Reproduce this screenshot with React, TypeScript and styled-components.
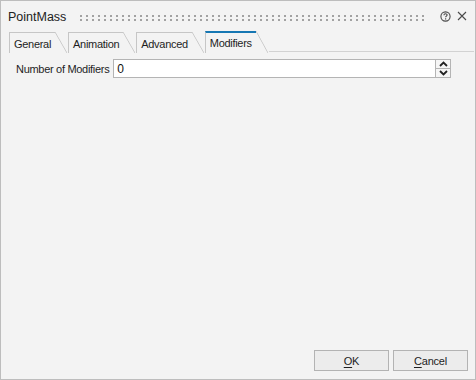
import React from 'react'
import styled, { createGlobalStyle } from 'styled-components'

const GlobalStyle = createGlobalStyle`
  html, body {
    margin: 0;
    padding: 0;
    background: #f3f3f3;
  }
  * {
    box-sizing: border-box;
  }
`

const tabs = ['General', 'Animation', 'Advanced', 'Modifiers']

export default function App() {
  const active = 'Modifiers'

  return (
    <>
      <GlobalStyle />
      <Dialog>
        <TitleBar>
          <Title>PointMass</Title>
          <Grip />
          <TitleIcon title="Help">
            <svg width="11" height="11" viewBox="0 0 11 11">
              <circle cx="5.5" cy="5.5" r="4.6" fill="none" stroke="#4a4a4a" strokeWidth="1.1" />
              <path d="M3.9 4.3 C3.9 3.2 4.6 2.8 5.5 2.8 C6.4 2.8 7.1 3.3 7.1 4.1 C7.1 5.1 5.6 5.2 5.6 6.3" fill="none" stroke="#4a4a4a" strokeWidth="1.1" />
              <rect x="5" y="7.3" width="1.2" height="1.2" fill="#4a4a4a" />
            </svg>
          </TitleIcon>
          <TitleIcon title="Close">
            <svg width="10" height="10" viewBox="0 0 10 10">
              <path d="M1 1 L9 9 M9 1 L1 9" stroke="#4a4a4a" strokeWidth="1.1" />
            </svg>
          </TitleIcon>
        </TitleBar>

        <TabStrip>
          {tabs.map((name) => (
            <Tab key={name} $active={name === active}>
              <TabLabel $active={name === active}>{name}</TabLabel>
              <TabSlant />
            </Tab>
          ))}
          <TabFiller />
        </TabStrip>

        <Content>
          <FieldRow>
            <FieldLabel>Number of Modifiers</FieldLabel>
            <SpinBox>
              <SpinInput defaultValue="0" />
              <SpinButtons>
                <SpinButton>
                  <svg width="9" height="6" viewBox="0 0 9 6">
                    <path d="M1 5 L4.5 1.5 L8 5" fill="none" stroke="#222" strokeWidth="1.8" />
                  </svg>
                </SpinButton>
                <SpinButton>
                  <svg width="9" height="6" viewBox="0 0 9 6">
                    <path d="M1 1 L4.5 4.5 L8 1" fill="none" stroke="#222" strokeWidth="1.8" />
                  </svg>
                </SpinButton>
              </SpinButtons>
            </SpinBox>
          </FieldRow>
        </Content>

        <Footer>
          <DialogButton>
            <u>O</u>K
          </DialogButton>
          <DialogButton>
            <u>C</u>ancel
          </DialogButton>
        </Footer>
      </Dialog>
    </>
  )
}

const Dialog = styled.div`
  width: 476px;
  height: 380px;
  border: 1px solid #bdbdbd;
  background: #f3f3f3;
  display: flex;
  flex-direction: column;
  font-family: "Liberation Sans", Arial, sans-serif;
  font-size: 11px;
  letter-spacing: -0.3px;
  color: #1e1e1e;
`

const TitleBar = styled.div`
  height: 30px;
  display: flex;
  align-items: center;
  padding: 0 7px 0 7px;
  gap: 4px;
`

const Title = styled.span`
  flex: none;
  width: 62px;
  white-space: nowrap;
  font-size: 12.5px;
  letter-spacing: 0;
  color: #222;
  margin-top: 1px;
`

/* two rows of 2px dots, kept on whole pixels so they stay crisp */
const Grip = styled.div`
  flex: 1;
  align-self: flex-start;
  height: 6px;
  margin: 14px 6px 0 6px;
  background-image: conic-gradient(at 2px 2px, transparent 75%, #a2a2a2 0);
  background-size: 6px 4px;
`

const TitleIcon = styled.span`
  flex: none;
  width: 12px;
  height: 12px;
  display: flex;
  align-items: center;
  justify-content: center;
  margin-left: 1px;
`

const TabStrip = styled.div`
  height: 22px;
  display: flex;
  align-items: flex-end;
  padding-left: 8px;
  padding-right: 1px;
`

const Tab = styled.div<{ $active: boolean }>`
  display: flex;
  height: ${(p) => (p.$active ? '22px' : '21px')};
  margin-right: 1px;
`

const TabLabel = styled.div<{ $active: boolean }>`
  display: flex;
  align-items: center;
  padding: 0 4px 0 4px;
  border-left: 1px solid #c6c6c6;
  border-top: ${(p) => (p.$active ? '2px solid #1677b3' : '1px solid #c6c6c6')};
  padding-top: ${(p) => (p.$active ? '0' : '1px')};
  white-space: nowrap;
`

const TabSlant = styled.div`
  width: 12px;
  background: linear-gradient(
    to bottom left,
    transparent calc(50% - 0.8px),
    #c9c9c9 50%,
    transparent calc(50% + 0.8px)
  );
`

const TabFiller = styled.div`
  flex: 1;
  height: 1px;
  background: #d2d2d2;
  margin-bottom: 1px;
`

const Content = styled.div`
  flex: 1;
  padding: 6px 24px 0 15px;
`

const FieldRow = styled.div`
  display: flex;
  align-items: center;
  gap: 4px;
`

const FieldLabel = styled.span`
  white-space: nowrap;
`

const SpinBox = styled.div`
  flex: 1;
  display: flex;
  height: 19px;
`

const SpinInput = styled.input`
  flex: 1;
  min-width: 0;
  height: 19px;
  border: 1px solid #b4b4b4;
  background: #fff;
  padding: 0 3px;
  font-family: "Liberation Sans", Arial, sans-serif;
  font-size: 12px;
  color: #111;
  outline: none;
`

const SpinButtons = styled.div`
  width: 15px;
  display: flex;
  flex-direction: column;
  border: 1px solid #b4b4b4;
  border-left: none;
  background: #f6f6f6;
`

const SpinButton = styled.div`
  flex: 1;
  display: flex;
  align-items: center;
  justify-content: center;
  & + & {
    border-top: 1px solid #b4b4b4;
  }
`

const Footer = styled.div`
  display: flex;
  justify-content: flex-end;
  gap: 4px;
  padding: 0 7px 8px 0;
`

const DialogButton = styled.button`
  width: 75px;
  height: 21px;
  border: 1px solid #b3b3b3;
  background: #ececec;
  font-family: "Liberation Sans", Arial, sans-serif;
  font-size: 11px;
  letter-spacing: -0.2px;
  color: #1e1e1e;
  padding: 0;
  cursor: pointer;

  u {
    text-decoration-thickness: 1px;
    text-underline-offset: 2px;
  }
`
